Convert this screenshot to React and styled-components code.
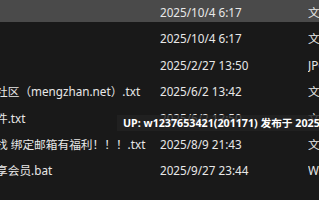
import React from "react";
import styled, { createGlobalStyle } from "styled-components";

const GlobalStyle = createGlobalStyle`
  html, body {
    margin: 0;
    padding: 0;
    background: #191919;
    overflow: hidden;
  }
  body {
    font-family: "Noto Sans", "Noto Sans CJK SC", sans-serif;
  }
`;

const Page = styled.div`
  position: relative;
  width: 319px;
  height: 200px;
  overflow: hidden;
  background: #191919;
`;

const List = styled.div`
  display: flex;
  flex-direction: column;
  gap: 4.4px;
  margin-left: -4px;
`;

const Row = styled.div`
  display: grid;
  grid-template-columns: 164px 148px 1fr;
  align-items: center;
  height: 22px;
  padding-top: 2px;
  box-sizing: border-box;
  background: ${(p) => (p.$selected ? "#4a4a4a" : "transparent")};
  color: #e8e8e8;
  font-size: 11.7px;
  white-space: nowrap;
`;

const Cell = styled.div`
  overflow: hidden;
  white-space: nowrap;
  line-height: 16px;
`;

const Tooltip = styled.div`
  position: absolute;
  left: 117px;
  top: 115px;
  height: 16px;
  padding: 0 6px;
  line-height: 16px;
  background: rgba(34, 34, 34, 0.82);
  color: #ffffff;
  font-size: 10.7px;
  font-weight: 700;
  white-space: nowrap;
`;

const rows = [
  { name: "", date: "2025/10/4 6:17", type: "文件夹", selected: true },
  { name: "", date: "2025/10/4 6:17", type: "文件夹" },
  { name: "", date: "2025/2/27 13:50", type: "JPG 文件" },
  { name: "社区（mengzhan.net）.txt", date: "2025/6/2 13:42", type: "文本文档" },
  { name: "件.txt", date: "2025/6/2 13:50", type: "文本文档" },
  { name: "找 绑定邮箱有福利！！！.txt", date: "2025/8/9 21:43", type: "文本文档" },
  { name: "享会员.bat", date: "2025/9/27 23:44", type: "Windows 批处理文件" },
];

export default function App() {
  return (
    <Page>
      <GlobalStyle />
      <List>
        {rows.map((r, i) => (
          <Row key={i} $selected={r.selected}>
            <Cell>{r.name}</Cell>
            <Cell>{r.date}</Cell>
            <Cell>{r.type}</Cell>
          </Row>
        ))}
      </List>
      <Tooltip>UP: w1237653421(201171) 发布于 2025/6/2</Tooltip>
    </Page>
  );
}
